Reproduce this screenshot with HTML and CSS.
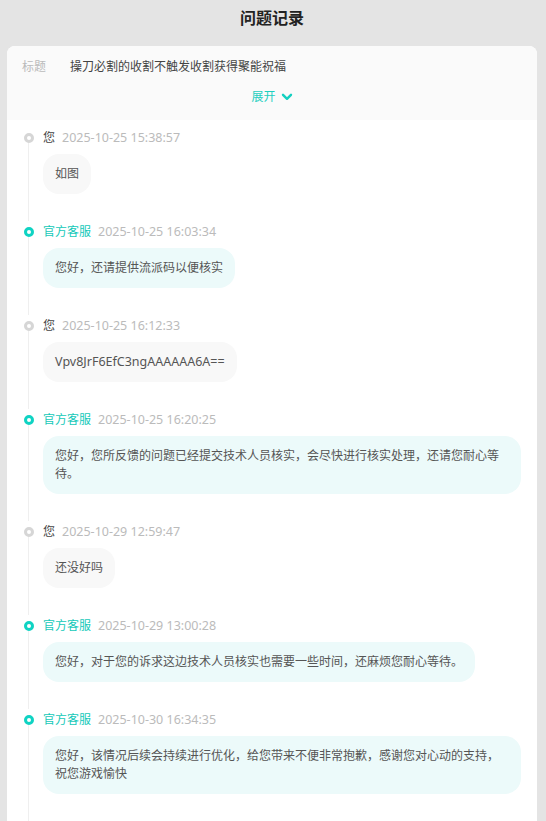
FILE: index.html
```html
<!DOCTYPE html>
<html lang="zh-CN">
<head>
    <meta charset="UTF-8">
    <meta name="viewport" content="width=device-width, initial-scale=1.0">
    <title>问题记录</title>
    <link rel="stylesheet" href="styles.css">
</head>
<body>
    <div class="page-title">问题记录</div>

    <div class="card">
        <div class="summary">
            <div class="summary-row">
                <span class="label">标题</span>
                <span class="value">操刀必割的收割不触发收割获得聚能祝福</span>
            </div>
            <div class="expand">
                展开
                <svg class="chevron" width="12" height="8" viewBox="0 0 12 8">
                    <path d="M2 1.8 L6 5.8 L10 1.8" fill="none" stroke="currentColor" stroke-width="2.4" stroke-linecap="round" stroke-linejoin="round"/>
                </svg>
            </div>
        </div>

        <div class="timeline">
            <div class="item">
                <div class="meta"><span class="name">您</span><span class="time">2025-10-25 15:38:57</span></div>
                <div class="bubble">如图</div>
            </div>
            <div class="item staff">
                <div class="meta"><span class="name">官方客服</span><span class="time">2025-10-25 16:03:34</span></div>
                <div class="bubble">您好，还请提供流派码以便核实</div>
            </div>
            <div class="item">
                <div class="meta"><span class="name">您</span><span class="time">2025-10-25 16:12:33</span></div>
                <div class="bubble latin">Vpv8JrF6EfC3ngAAAAAA6A==</div>
            </div>
            <div class="item staff">
                <div class="meta"><span class="name">官方客服</span><span class="time">2025-10-25 16:20:25</span></div>
                <div class="bubble">您好，您所反馈的问题已经提交技术人员核实，会尽快进行核实处理，还请您耐心等待。</div>
            </div>
            <div class="item">
                <div class="meta"><span class="name">您</span><span class="time">2025-10-29 12:59:47</span></div>
                <div class="bubble">还没好吗</div>
            </div>
            <div class="item staff">
                <div class="meta"><span class="name">官方客服</span><span class="time">2025-10-29 13:00:28</span></div>
                <div class="bubble">您好，对于您的诉求这边技术人员核实也需要一些时间，还麻烦您耐心等待。</div>
            </div>
            <div class="item staff">
                <div class="meta"><span class="name">官方客服</span><span class="time">2025-10-30 16:34:35</span></div>
                <div class="bubble">您好，该情况后续会持续进行优化，给您带来不便非常抱歉，感谢您对心动的支持，祝您游戏愉快</div>
            </div>
        </div>
    </div>
</body>
</html>
```

FILE: styles.css
```css
body {
    margin: 0;
    padding: 0 9px 0 7px;
    background-color: #e4e4e4;
    font-family: "Noto Sans", "Noto Sans CJK SC", sans-serif;
    color: #333;
}

.page-title {
    height: 46px;
    line-height: 37px;
    text-align: center;
    font-size: 16px;
    font-weight: bold;
    color: #222;
}

.card {
    background-color: #fff;
    border-radius: 8px 8px 0 0;
    overflow: hidden;
    min-height: 800px;
}

.summary {
    background-color: #fafafa;
    padding: 12px 15px 14px;
}

.summary-row {
    display: flex;
    font-size: 12px;
    line-height: 18px;
}

.summary-row .label {
    width: 48px;
    color: #bbb;
}

.summary-row .value {
    color: #444;
}

.expand {
    display: flex;
    justify-content: center;
    align-items: center;
    gap: 5px;
    margin-top: 12px;
    font-size: 12px;
    line-height: 18px;
    color: #1ccfbf;
}

.chevron {
    color: #14d0c0;
}

.timeline {
    padding: 9px 16px 0 17px;
}

.item {
    position: relative;
    padding-left: 19px;
    margin-bottom: 29px;
}

.item::before {
    content: "";
    position: absolute;
    left: 0;
    top: 4px;
    width: 4px;
    height: 4px;
    border: 3px solid #d6d6d6;
    border-radius: 50%;
    background-color: #fff;
    z-index: 1;
}

.item::after {
    content: "";
    position: absolute;
    left: 4px;
    top: 12px;
    bottom: -27px;
    width: 1px;
    background-color: #efefef;
}

.item.staff::before {
    border-color: #0fd3c3;
}

.meta {
    height: 18px;
    line-height: 18px;
    font-size: 12px;
    display: flex;
    gap: 7px;
}

.meta .name {
    color: #444;
}

.item.staff .name {
    color: #14c9b9;
}

.meta .time {
    font-size: 12.5px;
    color: #bbb;
}

.bubble {
    display: inline-block;
    margin-top: 7px;
    padding: 11px 12px;
    border-radius: 16px;
    background-color: #f8f8f8;
    font-size: 12px;
    line-height: 18px;
    color: #555;
}

.bubble.latin {
    font-size: 12.5px;
}

.item.staff .bubble {
    background-color: #ecfafa;
}
```
